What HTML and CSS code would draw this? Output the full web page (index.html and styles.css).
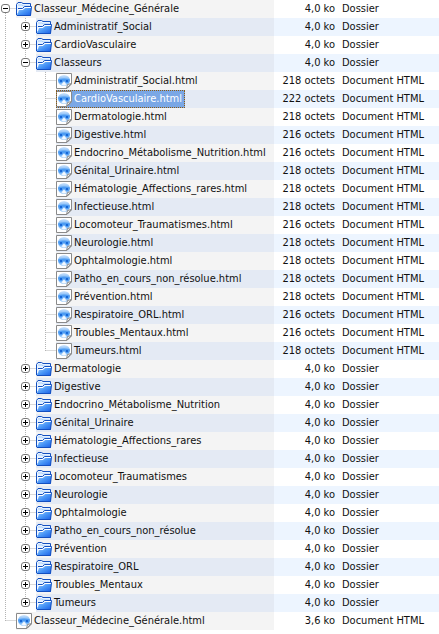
FILE: index.html
```html
<!DOCTYPE html>
<html lang="fr">
<head>
<meta charset="utf-8">
<title>Classeur Médecine Générale</title>
<link rel="stylesheet" href="styles.css">
</head>
<body>
<svg class="defs" aria-hidden="true">
  <defs>
    <linearGradient id="blue" x1="0" y1="0" x2="1" y2="1">
      <stop offset="0" stop-color="#9fd0ff"/>
      <stop offset="0.5" stop-color="#4a97f7"/>
      <stop offset="1" stop-color="#1a5fe6"/>
    </linearGradient>
    <linearGradient id="orb" x1="0" y1="0" x2="0" y2="1">
      <stop offset="0" stop-color="#cfe5fc"/>
      <stop offset="0.5" stop-color="#69adf5"/>
      <stop offset="1" stop-color="#b4d8fb"/>
    </linearGradient>
    <symbol id="folder" viewBox="0 0 16 16">
      <path d="M.5 14V3.500L2 1.500H5.500L7 2.500H14.500V14.500H1Z" fill="#e6f2ff" stroke="#1450c0"/>
      <path d="M2 4H6L7 5H13.500" fill="none" stroke="#a9cffa"/>
      <path d="M1 14.500L2.500 8.500H7L9 6.500H15.500L14.500 14.500Z" fill="url(#blue)"/>
      <path d="M1.500 12L2.500 8.500H7L9 6.500H15" fill="none" stroke="#fff"/>
      <path d="M2 7.500H6.500L8.500 5.500H15.500L14.500 14.500H1" fill="none" stroke="#1450c0"/>
    </symbol>
    <symbol id="file" viewBox="0 0 16 16">
      <path d="M.5.5H15.500V11L11 15.500H.5Z" fill="#fff" stroke="#8a8a8a"/>
      <ellipse cx="8" cy="7.500" rx="6" ry="5.500" fill="url(#orb)"/>
      <path d="M2 6.500Q8 4.500 14 6.500L13 9.500L11 10.500L8 7.500L5 10.500L3 9.500Z" fill="#4c9bf2"/>
      <path d="M4 7H6V9H4ZM10 7H12V9H10Z" fill="#1766d6"/>
      <path d="M5.500 11.500L8 8.500L10.500 11.500L8 12.500Z" fill="#f4f9ff"/>
      <path d="M10.500 15.500L11.500 11.500L15.500 10.500Z" fill="#f4f4f4" stroke="#8a8a8a"/>
    </symbol>
  </defs>
</svg>
<table class="files" aria-label="Fichiers"><tbody id="rows"></tbody></table>
<script src="script.js"></script>
</body>
</html>
```
FILE: styles.css
```css
body {
  margin: 0;
  background: #fff;
  color: #111;
  font: 11px/18px "DejaVu Sans Condensed", "DejaVu Sans", sans-serif;
}
.defs { position: absolute; width: 0; height: 0; }
.files { width: 100%; border-collapse: collapse; table-layout: fixed; white-space: nowrap; }
.files td { padding: 0; height: 18px; }
.files tr:nth-child(even) { background: #edf5ff; }
.files .name { width: 274px; }
.files .size { width: 61px; text-align: right; }
.files .kind { padding-left: 7px; }
.cell { display: flex; height: 18px; }
.guide { flex: none; width: 20px; height: 18px; background: #fff; }
.guide.root { width: 16px; }
.lines { stroke: #b4b4b4; stroke-dasharray: 1 1; fill: none; }
.box { fill: #fff; stroke: #777; }
.sign { stroke: #000; fill: none; }
.entry { flex: 1; display: flex; align-items: center; background: #f4f4f4; }
tr:nth-child(even) .entry { background: #e4eaf4; }
.label { display: flex; align-items: center; height: 18px; box-sizing: border-box; }
.icon { width: 16px; height: 16px; margin-right: 2px; }
.selected .label { background: #7aa7e5; color: #fff; outline: 1px dotted #8a5a14; outline-offset: -1px; padding-right: 3px; }
```
FILE: script.js
```js
const topics = ["Administratif_Social", "CardioVasculaire", "Classeurs", "Dermatologie", "Digestive",
  "Endocrino_Métabolisme_Nutrition", "Génital_Urinaire", "Hématologie_Affections_rares", "Infectieuse",
  "Locomoteur_Traumatismes", "Neurologie", "Ophtalmologie", "Patho_en_cours_non_résolue", "Prévention",
  "Respiratoire_ORL", "Troubles_Mentaux", "Tumeurs"];
const sizes = [218, 222, 218, 216, 216, 218, 218, 218, 216, 218, 218, 218, 218, 216, 216, 218];
const documents = topics.filter(name => name !== "Classeurs");

const rows = [{ name: "Classeur_Médecine_Générale", depth: 0, sign: "-" }];
topics.forEach((name, i) => {
  const open = name === "Classeurs";
  rows.push({ name, depth: 1, sign: open ? "-" : "+", last: i === topics.length - 1 });
  if (open) documents.forEach((doc, n) => rows.push({
    name: doc + ".html", depth: 2, size: sizes[n] + " octets", last: n === documents.length - 1
  }));
});
rows.push({ name: "Classeur_Médecine_Générale.html", depth: 0, size: "3,6 ko", last: true });

function guide(row, level, first) {
  const root = level === 0;
  const x = root ? 5.5 : 9.5, width = root ? 16 : 20;
  let art = "";
  if (level < row.depth) {
    art = `<path class="lines" d="M${x} 0V18"/>`;
  } else {
    art = `<path class="lines" d="M${x} ${first ? 9 : 0}V${row.last ? 9 : 18}M${x} 8.5H${width}"/>`;
    if (row.sign) {
      art += `<rect class="box" x="${x - 4}" y="4.5" width="8" height="8" rx="2.5"/>`;
      art += `<path class="sign" d="M${x - 2.5} 8.5H${x + 2.5}${row.sign === "+" ? `M${x} 6V11` : ""}"/>`;
    }
  }
  return `<svg class="guide${root ? " root" : ""}" viewBox="0 0 ${width} 18" aria-hidden="true">${art}</svg>`;
}

document.getElementById("rows").innerHTML = rows.map((row, i) => {
  let guides = "";
  for (let level = 0; level <= row.depth; level++) guides += guide(row, level, i === 0);
  const selected = row.name === "CardioVasculaire.html";
  return `<tr${selected ? ' class="selected" aria-selected="true"' : ""}>
    <td class="name"><div class="cell">${guides}<div class="entry"><span class="label">
      <svg class="icon" aria-hidden="true"><use href="#${row.size ? "file" : "folder"}"/></svg>${row.name}</span></div></div></td>
    <td class="size">${row.size || "4,0 ko"}</td>
    <td class="kind">${row.size ? "Document HTML" : "Dossier"}</td></tr>`;
}).join("");
```
